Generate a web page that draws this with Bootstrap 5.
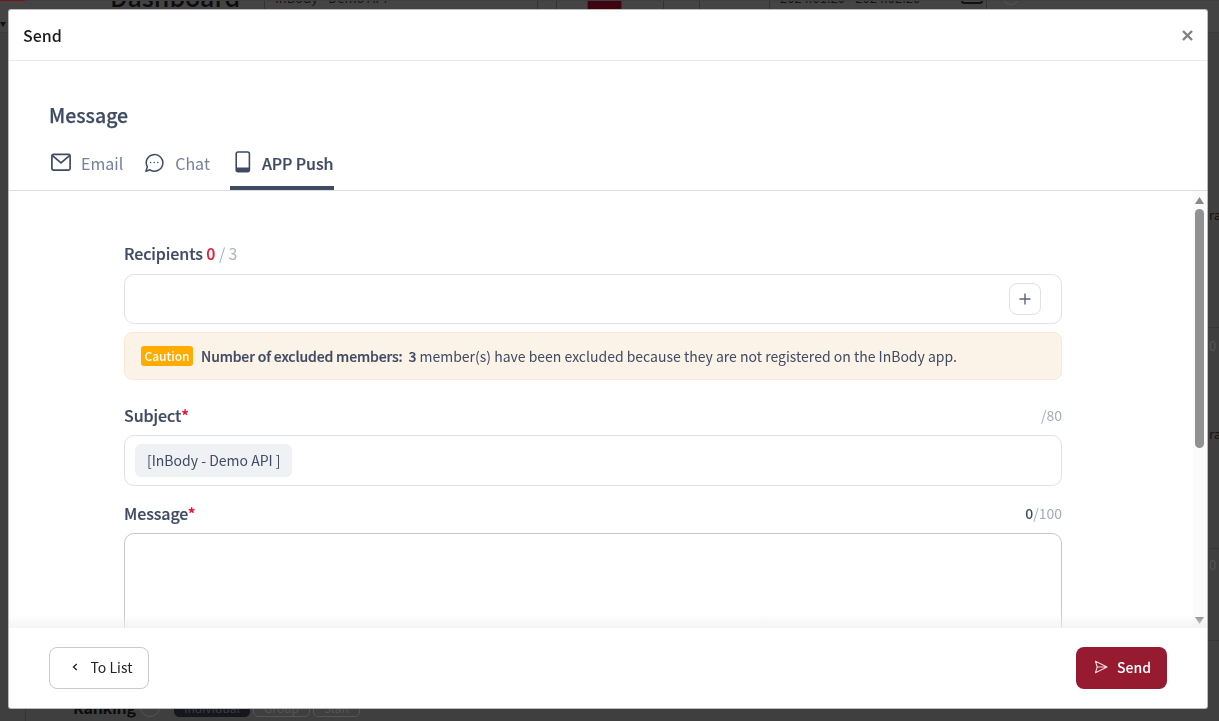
<!DOCTYPE html>
<html lang="en">
<head>
<meta charset="utf-8">
<title>Send</title>
<link href="https://cdn.jsdelivr.net/npm/bootstrap@5.3.0/dist/css/bootstrap.min.css" rel="stylesheet">
<style>
html,body{height:100%;overflow:hidden}
body{background:#3f3f3f;font-family:"Noto Sans CJK KR","Noto Sans",sans-serif;color:#3f4a63;font-size:15px}
.back-page{height:721px;color:#0c0c0c;overflow:hidden}
.back-redline{height:1px;width:25px;background:#7a1020}
.back-top{height:32px;background:#444;border-bottom:1px solid #3a3a3a;overflow:hidden}
.back-cell{height:32px;border-right:1px solid #333;flex:none}
.back-title{width:240px;font-size:25px;font-weight:500;line-height:1;padding-left:85px;white-space:nowrap}
.back-title span{display:block;margin-top:-17px}
.back-sub{width:273px;font-size:13px;line-height:1;padding-left:10px;white-space:nowrap;color:#151515}
.back-sub span{display:block;margin-top:-10px}
.back-a{width:19px}.back-b{width:31px}
.back-maroon{width:34px;background:#3e0410}
.back-c{width:42px}.back-d{width:36px}.back-e{width:70px}
.back-date{width:217px;font-size:13px;line-height:1;padding:0 3px 0 10px;white-space:nowrap;color:#151515}
.back-date span{margin-top:-10px}
.back-cal{width:22px;height:14px;border:2px solid #111;border-radius:3px;margin-top:-11px;flex:none}
.back-circle{width:18px;height:18px;border:1px solid #555;border-radius:50%;margin:-14px 0 0 15px;flex:none}
.back-caret{width:0;height:0;border:solid transparent;border-width:5px 3px 0;border-top-color:#111;margin:21px 19px 0 0;flex:none}
.back-rows{padding-left:1209px;height:608px;overflow:hidden}
.back-row{border-bottom:1px solid #363636;font-size:13px;white-space:nowrap;color:#111}
.back-row p{margin:0;line-height:18px}
.back-row .back-zero{color:#555}
.back-r1{height:295px;padding-top:173px}
.back-r2{height:221px;padding-top:9px}
.back-r2 p+p{margin-top:70px}
.back-r3{height:92px;padding-top:7px}
.back-bottom{padding:56px 0 0 47px;height:90px;margin-left:25px;border-left:1px solid #333;overflow:hidden;gap:3px}
.back-rank{width:60px;font-size:16px;font-weight:700;line-height:20px;color:#0c0c0c;letter-spacing:-.3px;white-space:nowrap}
.back-info{width:20px;height:20px;border:1px solid #555;border-radius:50%;margin:0 11px 0 4px}
.back-tab{height:23px;border:1px solid #555;border-radius:0 0 5px 5px;font-size:12px;color:#555;text-align:center;line-height:18px;margin-top:-3px;padding-top:4px}
.back-w1{width:76px;background:#15171c;border-color:#15171c;color:#3a3d44}
.back-w2{width:57px}.back-w3{width:47px}
.modal.send-wrap{display:block;overflow:hidden}
.send-dialog{margin:10px 0 0 9px;width:1198px;max-width:none;height:698px;pointer-events:auto}
.send-content{height:698px;border:0;border-radius:2px;overflow:hidden;box-shadow:0 0 0 1px #bbb}
.send-header{height:51px;padding:0 14px;border-bottom:1px solid #e8e9ec;flex:none}
.send-title{font-size:16px;font-weight:500;color:#1a1a1a;line-height:1}
.send-x{width:11px;height:11px;padding:0;border:0;background:none;line-height:0}
.send-head{padding:39px 0 0 40px;border-bottom:1px solid #dcdee5;flex:none;height:130px}
.send-h{font-size:19.5px;font-weight:500;line-height:30px;margin:0 0 14px;color:#3f4a63;-webkit-text-stroke:.25px #3f4a63}
.send-tabs{border:0;gap:19px;flex-wrap:nowrap}
.send-tabs .nav-link{border:0;border-radius:0;padding:7px 1px 0 2px;height:46px;display:flex;align-items:flex-start;gap:10px;color:#74809a;font-size:16px;line-height:24px;font-weight:400;background:none}
.send-tabs .nav-link svg{flex:none;margin-top:1px}
.send-tabs .nav-link svg.phone-ico{margin-top:0}
.send-tabs .nav-link.active{color:#3f4a63;font-weight:500;letter-spacing:-.1px;border-bottom:4px solid #3f4a63;padding:7px 1px 0 5px;background:none;gap:11px;-webkit-text-stroke:.2px #3f4a63}
.send-scroll-wrap{position:relative;flex:1 1 auto;min-height:0}
.send-scroll{height:100%;overflow-y:auto;padding:51px 131px 56px 115px;flex:1 1 auto;min-width:0}
.fake-bar{width:14px;flex:none;background:#fbfbfb;padding:6px 1px 4px 0;gap:5px}
.fake-thumb{width:9px;height:239px;background:#919191;border-radius:5px}
.fake-down{margin-top:auto}
.send-fade{position:absolute;left:0;right:0;bottom:0;height:14px;background:linear-gradient(rgba(240,240,240,0),rgba(240,240,240,.75));pointer-events:none}
.field-head{height:26px;line-height:22px;margin-bottom:5px}
.field-first{margin-bottom:6px}
.field-label{font-size:16px;font-weight:500;color:#3f4a63;margin:0;letter-spacing:-.1px;-webkit-text-stroke:.2px #3f4a63}
.req{color:#e8112d;-webkit-text-stroke:.2px #e8112d}
.count-red{color:#dc1e3c;-webkit-text-stroke:.2px #dc1e3c}
.count-mute{color:#aeb4c2;font-weight:400;-webkit-text-stroke:0}
.count-right{font-size:14px;color:#a4abba}
.count-right b{font-weight:500;color:#3f4a63}
.recip-box{height:50px;border:1px solid #dfe1e8;border-radius:10px;padding:0 20px 0 0}
.plus-btn{width:32px;height:32px;padding:0;border:1px solid #dfe1e8;border-radius:8px;background:#fff}
.caution{height:48px;background:#fcf3e8;border:1px solid #fbe9d3;border-radius:8px;padding:0 16px;margin:8px 0 24px;font-size:14px;color:#3f4a63;gap:8px}
.caution-tag{background:#ffab00;color:#fff;font-size:12px;font-weight:500;border-radius:3px;height:20px;width:52px;line-height:20px;text-align:center;padding:0;flex:none}
.caution strong{font-weight:500;letter-spacing:-.15px;-webkit-text-stroke:.2px #3f4a63}
.subject-box{height:51px;border:1px solid #dfe1e8;border-radius:10px;padding:0 10px;margin-bottom:16px}
.subject-chip{background:#f0f1f5;border-radius:6px;height:33px;line-height:33px;padding:0 12px;font-size:14px;color:#3f4a63}
.send-text{display:block;width:100%;height:347px;border:1px solid #c8c8c8;border-radius:10px;resize:none;outline:0}
.send-footer{height:80px;flex:none;border:0;padding:0 40px;background:#fff}
.send-footer>*{margin:0}
.back-btn{width:100px;height:42px;border:1px solid #c9c9d2;border-radius:8px;color:#222;font-size:14px;background:#fff;padding:0 0 2px 6px;gap:13px}
.go-btn{width:91px;height:42px;border:0;border-radius:8px;color:#fff;font-size:14px;font-weight:500;background:#971b30;padding:0 0 2px 2px;gap:9px}
.go-btn:hover{background:#971b30;color:#fff}
</style>
</head>
<body>
<div class="back-page" aria-hidden="true">
  <div class="back-redline"></div>
  <div class="back-top d-flex">
    <div class="back-caret"></div>
    <div class="back-cell back-title"><span>Dashboard</span></div>
    <div class="back-cell back-sub"><span>InBody - Demo API</span></div>
    <div class="back-cell back-a"></div>
    <div class="back-cell back-b"></div>
    <div class="back-cell back-maroon"></div>
    <div class="back-cell back-c"></div>
    <div class="back-cell back-d"></div>
    <div class="back-cell back-e"></div>
    <div class="back-cell back-date d-flex justify-content-between"><span>2024.01.20 - 2024.02.20</span><div class="back-cal"></div></div>
    <div class="back-circle"></div>
  </div>
  <div class="back-rows">
    <div class="back-row back-r1"><p>ra</p></div>
    <div class="back-row back-r2"><p class="back-zero">0</p><p>ra</p></div>
    <div class="back-row back-r3"><p class="back-zero">0</p></div>
  </div>
  <div class="back-bottom d-flex align-items-start">
    <div class="back-rank">Ranking</div>
    <div class="back-info"></div>
    <div class="back-tab back-w1">Individual</div>
    <div class="back-tab back-w2">Group</div>
    <div class="back-tab back-w3">Staff</div>
  </div>
</div>

<div class="modal send-wrap" tabindex="-1">
  <div class="modal-dialog send-dialog">
    <div class="modal-content send-content">
      <div class="modal-header send-header">
        <h5 class="modal-title send-title">Send</h5>
        <button type="button" class="send-x" aria-label="Close">
          <svg width="11" height="11" viewBox="0 0 11 11" fill="none" stroke="#808080" stroke-width="2.4"><path d="M1 1l9 9M10 1l-9 9"/></svg>
        </button>
      </div>
      <div class="send-head">
        <h4 class="send-h">Message</h4>
        <ul class="nav nav-tabs send-tabs">
          <li class="nav-item"><a class="nav-link" href="#">
            <svg width="20" height="20" viewBox="0 0 20 20" fill="none" stroke="#3f4a63" stroke-width="1.7"><rect x=".9" y="2.400" width="18.200" height="15.800" rx="1.600"/><path d="M1.200 3.400L10 11l8.800-7.600"/></svg>Email</a></li>
          <li class="nav-item"><a class="nav-link" href="#">
            <svg width="20" height="20" viewBox="0 0 20 20" fill="none" stroke="#3f4a63" stroke-width="1.5"><path d="M.9 19.200l1.400-4.300A8.300 8.300 0 1 1 5 17.800z" stroke-linejoin="round"/><circle cx="5.600" cy="10.500" r=".8" fill="#3f4a63" stroke="none"/><circle cx="9.200" cy="10.500" r=".8" fill="#3f4a63" stroke="none"/><circle cx="12.800" cy="10.500" r=".8" fill="#3f4a63" stroke="none"/></svg>Chat</a></li>
          <li class="nav-item"><a class="nav-link active" href="#">
            <svg class="phone-ico" width="16" height="22" viewBox="0 0 16 22" fill="none"><rect x="1.200" y="1" width="13.200" height="19.600" rx="1.800" stroke="#3f4a63" stroke-width="1.600"/><path d="M1.200 16.500h13.200v2.300a1.800 1.800 0 0 1-1.800 1.800H3a1.800 1.800 0 0 1-1.800-1.800z" fill="#3f4a63"/></svg>APP Push</a></li>
        </ul>
      </div>
      <div class="send-scroll-wrap d-flex">
        <div class="send-scroll">
          <div class="field-head field-first"><label class="field-label">Recipients <span class="count-red">0</span> <span class="count-mute">/ 3</span></label></div>
          <div class="recip-box d-flex align-items-center justify-content-end">
            <button type="button" class="plus-btn d-flex align-items-center justify-content-center" aria-label="Add">
              <svg width="12" height="12" viewBox="0 0 12 12" fill="none" stroke="#5c647a" stroke-width="1.400"><path d="M6 .5v11M.5 6h11"/></svg>
            </button>
          </div>
          <div class="caution d-flex align-items-center">
            <span class="badge caution-tag">Caution</span>
            <span><strong>Number of excluded members:&nbsp; 3</strong> member(s) have been excluded because they are not registered on the InBody app.</span>
          </div>
          <div class="field-head d-flex justify-content-between"><label class="field-label">Subject<span class="req">*</span></label><span class="count-right">/80</span></div>
          <div class="subject-box d-flex align-items-center"><span class="subject-chip">[InBody - Demo API ]</span></div>
          <div class="field-head d-flex justify-content-between"><label class="field-label">Message<span class="req">*</span></label><span class="count-right"><b>0</b>/100</span></div>
          <textarea class="send-text" aria-label="Message"></textarea>
        </div>
        <div class="fake-bar d-flex flex-column align-items-center" aria-hidden="true">
          <svg width="9" height="7" viewBox="0 0 9 7"><path d="M4.500 0L9 7H0z" fill="#888"/></svg>
          <div class="fake-thumb"></div>
          <svg class="fake-down" width="9" height="7" viewBox="0 0 9 7"><path d="M4.500 7L9 0H0z" fill="#888"/></svg>
        </div>
        <div class="send-fade"></div>
      </div>
      <div class="modal-footer send-footer justify-content-between">
        <button type="button" class="btn back-btn d-flex align-items-center justify-content-center">
          <svg width="6" height="8" viewBox="0 0 6 8" fill="none" stroke="#222" stroke-width="1.300"><path d="M4.800 1L1.500 4l3.300 3"/></svg>To List</button>
        <button type="button" class="btn go-btn d-flex align-items-center justify-content-center">
          <svg width="14" height="14" viewBox="0 0 14 14" fill="none" stroke="#f4d9de" stroke-width="1.100" stroke-linejoin="round"><path d="M1.500 1.300L13 7 1.500 12.700 3.200 7zM3.200 7H13"/></svg>Send</button>
      </div>
    </div>
  </div>
</div>
<script src="https://cdn.jsdelivr.net/npm/bootstrap@5.3.0/dist/js/bootstrap.bundle.min.js"></script>
</body>
</html>
